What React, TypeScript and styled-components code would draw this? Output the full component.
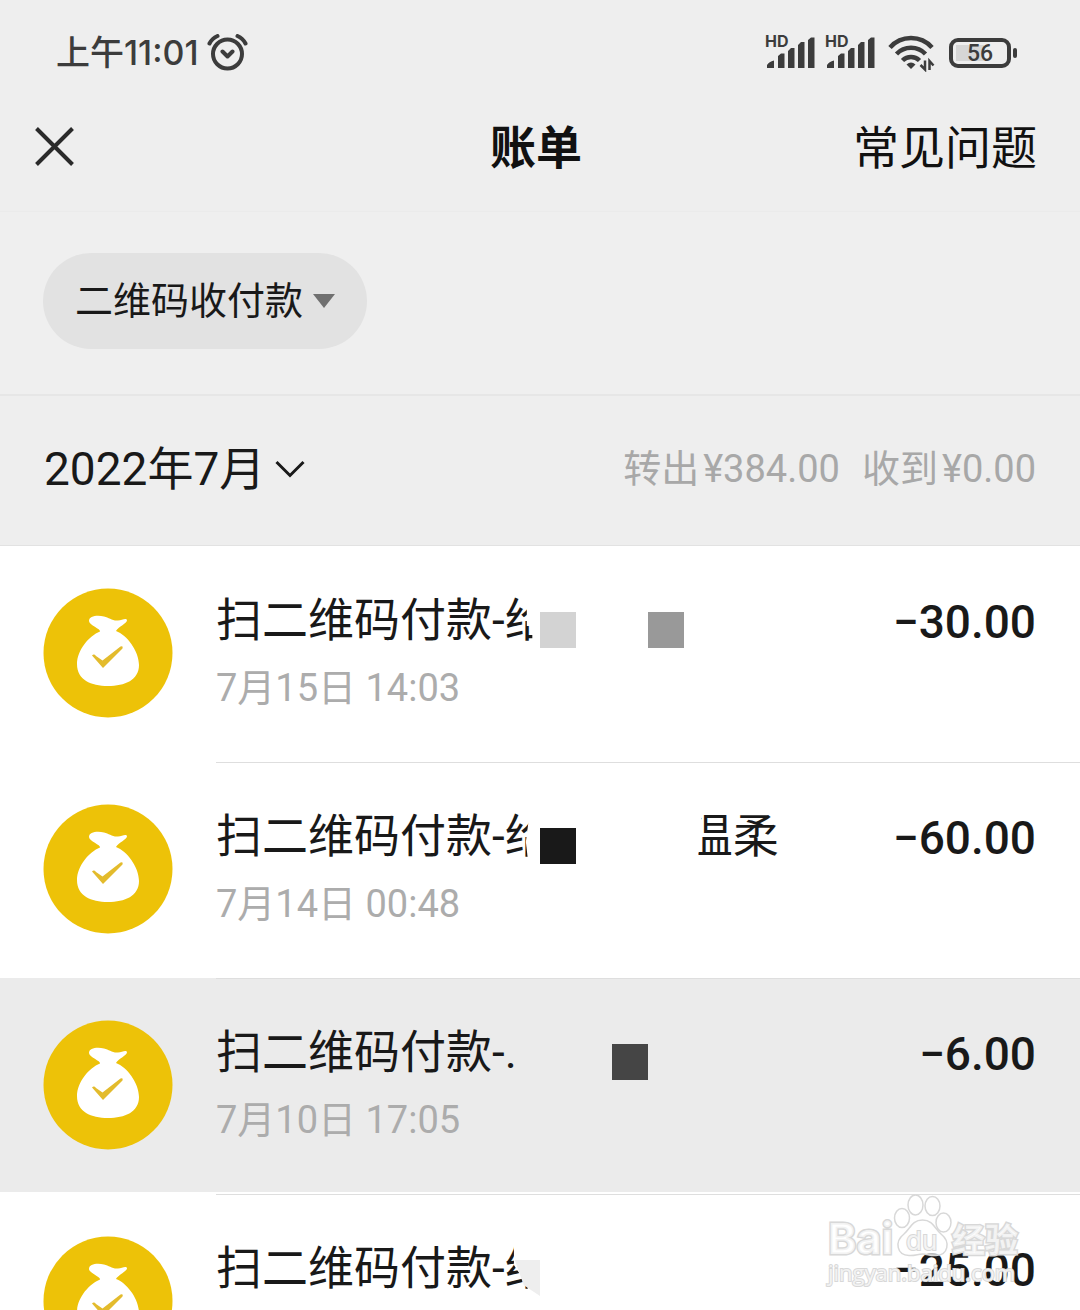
import React from "react";
import styled, { createGlobalStyle } from "styled-components";

const Global = createGlobalStyle`
  *, *::before, *::after { box-sizing: border-box; }
  body {
    margin: 0;
    background: #fff;
    color: #191919;
    font-family: Roboto, "Noto Sans CJK SC", sans-serif;
  }
  button { border: 0; background: none; padding: 0; color: inherit; font: inherit; cursor: pointer; }
`;

const Screen = styled.div`
  position: relative;
  display: flex;
  flex-direction: column;
  height: 100vh;
  overflow: hidden;
`;

const StatusBar = styled.div`
  display: flex;
  flex: none;
  align-items: center;
  justify-content: space-between;
  padding: 34px 63px 0 56px;
  height: 72px;
  background: #eee;
  color: #3c3c3c;
`;

const Clock = styled.div`
  display: flex;
  align-items: center;
  gap: 8px;
  font: 500 34px/40px Inter, "Noto Sans CJK SC", sans-serif;
`;

const StatusIcons = styled.div`
  display: flex;
  align-items: center;
  gap: 10px;
`;

const Battery = styled.div`
  display: flex;
  align-items: center;
  gap: 2px;
  margin-left: 4px;
  &::after {
    content: "";
    width: 4px;
    height: 10px;
    border-radius: 2px;
    background: #3c3c3c;
  }
`;

const BatteryCell = styled.div<{ $level: number }>`
  width: 62px;
  height: 30px;
  border: 4px solid #3c3c3c;
  border-radius: 9px;
  padding: 3px;
  background: linear-gradient(#d6d6d6, #d6d6d6) 3px 3px / ${(p) => p.$level / 2}px 16px no-repeat;
  text-align: center;
  font: 500 23px/18px Roboto, sans-serif;
`;

const NavBar = styled.header`
  display: grid;
  flex: none;
  grid-template-columns: 1fr auto 1fr;
  align-items: center;
  height: 140px;
  padding: 10px 43px 0 35px;
  background: #eee;
  border-bottom: 1px solid #ebebeb;
`;

const CloseButton = styled.button`
  display: flex;
  justify-self: start;
`;

const Title = styled.h1`
  margin: 0;
  padding-top: 3px;
  font-size: 46px;
  line-height: 60px;
  font-weight: 700;
  color: #111;
`;

const HelpLink = styled.a`
  justify-self: end;
  padding-top: 3px;
  font-size: 46px;
  line-height: 60px;
  color: #111;
  text-decoration: none;
`;

const FilterBar = styled.div`
  flex: none;
  height: 184px;
  padding: 41px 43px 0;
  background: #efefef;
  border-bottom: 2px solid #e6e6e6;
`;

const FilterChip = styled.button`
  display: flex;
  align-items: center;
  gap: 10px;
  height: 96px;
  padding: 0 32px;
  border-radius: 48px;
  background: #e2e2e2;
  && { font-size: 38px; }
  line-height: 48px;
`;

const MonthBar = styled.div`
  display: flex;
  flex: none;
  align-items: center;
  justify-content: space-between;
  height: 150px;
  padding: 0 44px 4px;
  background: #eee;
  border-bottom: 1px solid #e2e2e2;
`;

const MonthButton = styled.button`
  display: flex;
  align-items: center;
  gap: 10px;
  && { font-size: 46px; }
  line-height: 60px;
`;

const Totals = styled.div`
  display: flex;
  gap: 22px;
  font-size: 38px;
  line-height: 48px;
  color: #a8a8a8;
`;

const Total = styled.span`
  display: flex;
  gap: 4px;
`;

const List = styled.ul`
  flex: 1;
  min-height: 0;
  margin: 0;
  padding: 0;
  list-style: none;
`;

const Row = styled.li<{ $active?: boolean }>`
  display: flex;
  gap: 43px;
  height: 216px;
  padding-left: 43px;
  border-bottom: 2px solid #fff;
  background: ${(p) => (p.$active ? "#ebebeb" : "#fff")};
`;

const BagIcon = styled.svg`
  flex: none;
  margin-top: 42px;
`;

const Entry = styled.div<{ $divided: boolean }>`
  position: relative;
  display: flex;
  flex: 1;
  justify-content: space-between;
  padding: 43px 44px 0 0;
  border-top: 1px solid ${(p) => (p.$divided ? "#dedede" : "transparent")};
`;

const Payee = styled.div`
  display: flex;
  font-size: 46px;
  line-height: 60px;
`;

const Clipped = styled.span<{ $shape: string }>`
  display: inline-block;
  clip-path: polygon(${(p) => p.$shape});
`;

const NameTail = styled.span`
  margin-left: 136px;
`;

const Time = styled.time`
  display: block;
  margin-top: 14px;
  font-size: 38px;
  line-height: 48px;
  color: #acacac;
`;

const Amount = styled.div`
  padding-top: 2px;
  font-size: 46px;
  line-height: 60px;
  font-weight: 500;
`;

const Mosaic = styled.span<{ $x: number; $color: string; $fade?: boolean }>`
  position: absolute;
  top: 65px;
  left: ${(p) => p.$x}px;
  width: 36px;
  height: 36px;
  background: ${(p) => p.$color};
  clip-path: ${(p) => (p.$fade ? "polygon(30% 0, 100% 0, 100% 100%, 55% 70%)" : "none")};
`;

const SignalIcon = styled.svg`
  overflow: visible;
`;

const Watermark = styled.svg`
  position: absolute;
  right: 56px;
  bottom: 14px;
  pointer-events: none;
`;

function Signal() {
  return (
    <SignalIcon width="50" height="36" viewBox="0 0 50 36" fill="#3c3c3c">
      <text x="0" y="12" fontFamily="Inter, sans-serif" fontSize="16" fontWeight="700">HD</text>
      <path d="M2 33v-3q2-3.500 7-4.500v7.500zM13 33V21l3-2.500h3.500V33zM23 33V16l3-3h3.500v20zM33 33V10l3-3h3.500v26zM43 33V5l3-2.500h3.500V33z" />
    </SignalIcon>
  );
}

function Wifi() {
  return (
    <svg width="50" height="38" viewBox="-3 0 50 38" fill="none" stroke="#3c3c3c" strokeWidth="4.500">
      <path d="M2 13.500a28 28 0 0 1 42 0M8.500 20a20 20 0 0 1 29 0M14.500 26.500a12 12 0 0 1 17 0" />
      <path d="M18.500 30.500q4.500-4 9 0l-4.500 4.500z" fill="#3c3c3c" stroke="none" />
      <path d="M37 26.500v9l-4.500-4.500M41.500 36v-9l4 4.500" strokeWidth="2.500" />
    </svg>
  );
}

function Bag() {
  return (
    <BagIcon width="130" height="130" viewBox="0 0 130 130" aria-hidden="true">
      <circle cx="65" cy="65" r="64.500" fill="#edc208" />
      <path
        fill="#fff"
        d="M46 33C46 28 54 27 61 28.500C66 29.500 69 33 75 32.500C79 32 83 29.500 84 32C84.500 35 75 39 73 43C84 47 96 63 96 77C96 92 82 98 65 98C48 98 34 92 34 76C34 62 46 48 57 43.500C58 41 46 37 46 33Z"
      />
      <path fill="#e3bb2c" d="M49 67.500Q51 65.500 53 68L59.500 72.500L77.500 58.500Q80.500 57.500 79.500 60.500L60 80Z" />
    </BagIcon>
  );
}

type Tile = { x: number; color: string; fade?: boolean };
type Item = {
  text: string;
  cut?: string;
  shape?: string;
  tail?: boolean;
  time?: string;
  amount: string;
  active?: boolean;
  tiles: Tile[];
};

const items: Item[] = [
  {
    text: "扫二维码付款-",
    cut: "给",
    shape: "0 0, 48% 0, 48% 60%, 60% 60%, 60% 100%, 0 100%",
    time: "7月15日 14:03",
    amount: "−30.00",
    tiles: [{ x: 324, color: "#d3d3d3" }, { x: 432, color: "#999" }],
  },
  {
    text: "扫二维码付款-",
    cut: "给",
    shape: "0 0, 56% 0, 46% 60%, 52% 100%, 0 100%",
    tail: true,
    time: "7月14日 00:48",
    amount: "−60.00",
    tiles: [{ x: 324, color: "#191919" }],
  },
  {
    text: "扫二维码付款-.",
    time: "7月10日 17:05",
    amount: "−6.00",
    active: true,
    tiles: [{ x: 396, color: "#454545" }],
  },
  {
    text: "扫二维码付款-",
    cut: "给",
    shape: "0 0, 20% 0, 20% 45%, 50% 80%, 50% 100%, 0 100%",
    amount: "−25.00",
    tiles: [{ x: 288, color: "#eee", fade: true }],
  },
];

export default function App() {
  return (
    <Screen>
      <Global />
      <StatusBar>
        <Clock>
          上午11:01
          <svg width="41" height="38" viewBox="0 0 41 38" fill="none" stroke="#3c3c3c" strokeWidth="4" strokeLinecap="round" strokeLinejoin="round">
            <circle cx="20.500" cy="20" r="14.500" />
            <path d="M2.500 9.500Q5 4.500 10.500 2M30.500 2Q36 4.500 38.500 9.500M15.500 17.500l5 5 5-5" />
          </svg>
        </Clock>
        <StatusIcons>
          <Signal />
          <Signal />
          <Wifi />
          <Battery>
            <BatteryCell $level={56}>56</BatteryCell>
          </Battery>
        </StatusIcons>
      </StatusBar>

      <NavBar>
        <CloseButton aria-label="关闭">
          <svg width="39" height="39" viewBox="0 0 39 39" stroke="#2a2a2a" strokeWidth="4">
            <path d="M1.500 1.500l36 36M37.500 1.500l-36 36" />
          </svg>
        </CloseButton>
        <Title>账单</Title>
        <HelpLink href="#faq">常见问题</HelpLink>
      </NavBar>

      <FilterBar>
        <FilterChip>
          二维码收付款
          <svg width="22" height="14" viewBox="0 0 22 14" fill="#707070">
            <path d="M0 0h22L11 14z" />
          </svg>
        </FilterChip>
      </FilterBar>

      <MonthBar>
        <MonthButton>
          2022年7月
          <svg width="30" height="18" viewBox="0 0 30 18" fill="none" stroke="#191919" strokeWidth="3">
            <path d="M1.500 2L15 15.500 28.500 2" />
          </svg>
        </MonthButton>
        <Totals>
          <Total><span>转出</span><span>¥384.00</span></Total>
          <Total><span>收到</span><span>¥0.00</span></Total>
        </Totals>
      </MonthBar>

      <List>
        {items.map((item, index) => (
          <Row key={item.amount} $active={item.active}>
            <Bag />
            <Entry $divided={index > 0}>
              <div>
                <Payee>
                  {item.text}
                  {item.cut && item.shape && <Clipped $shape={item.shape}>{item.cut}</Clipped>}
                  {item.tail && (
                    <NameTail>
                      <Clipped $shape="32% 0, 100% 0, 100% 100%, 23% 100%, 23% 80%, 32% 70%">温</Clipped>柔
                    </NameTail>
                  )}
                </Payee>
                {item.time && <Time>{item.time}</Time>}
              </div>
              <Amount>{item.amount}</Amount>
              {item.tiles.map((tile) => (
                <Mosaic key={tile.x} $x={tile.x} $color={tile.color} $fade={tile.fade} />
              ))}
            </Entry>
          </Row>
        ))}
      </List>

      <Watermark width="200" height="104" viewBox="0 0 200 104" fill="#fff" fillOpacity="0.7" stroke="#d8d8d8" strokeWidth="1.500">
        <ellipse cx="78" cy="26" rx="7.500" ry="9.500" />
        <ellipse cx="91.500" cy="13" rx="7.500" ry="10" />
        <ellipse cx="108.500" cy="14" rx="7.500" ry="9.500" />
        <ellipse cx="119.500" cy="30.500" rx="7.500" ry="9.500" />
        <path d="M98.500 28C109 28 111 37 117 42C127 50 124 63 112 63.500C106 64 103 62 98.500 62S91 64 85 63.500C73 63 70 50 80 42C86 37 88 28 98.500 28Z" />
        <g fontFamily='Inter, "Noto Sans CJK SC", sans-serif' fontWeight="700" paintOrder="stroke">
          <text x="4" y="62" fontSize="43" strokeWidth="3">Bai</text>
          <text x="82" y="58" fontSize="26" fontWeight="400" strokeWidth="2">du</text>
          <text x="128" y="60" fontSize="33" strokeWidth="3">经验</text>
        </g>
        <text x="4" y="89" fontFamily='"Open Sans", sans-serif' fontSize="22" strokeWidth="2" paintOrder="stroke">jingyan.baidu.com</text>
      </Watermark>
    </Screen>
  );
}
